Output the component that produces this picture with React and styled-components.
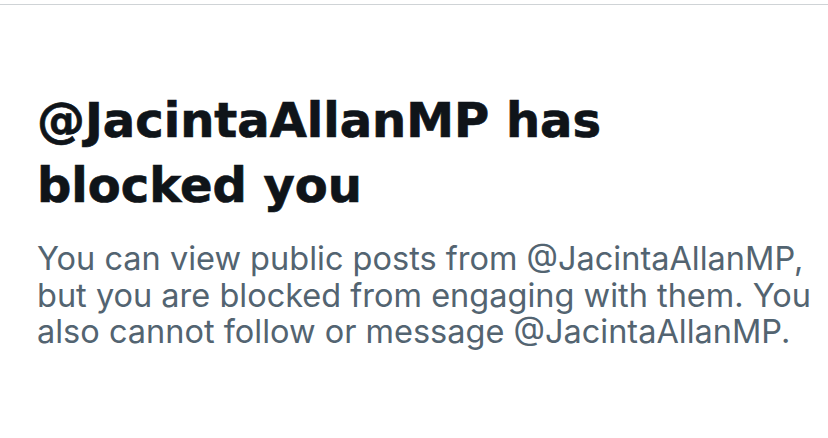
import React from 'react';
import styled, { createGlobalStyle } from 'styled-components';

const GlobalStyle = createGlobalStyle`
    html, body {
        margin: 0;
        padding: 0;
        background: #ffffff;
    }
    body {
        font-family: Inter, "Noto Sans", "Liberation Sans", sans-serif;
    }
`;

const Page = styled.div`
    width: 828px;
    height: 438px;
    background: #ffffff;
    padding-top: 4px;
    box-sizing: border-box;
`;

const Divider = styled.div`
    height: 1px;
    background: #cfd3d6;
`;

const Content = styled.div`
    padding: 83px 10px 0 37px;
`;

const Title = styled.h1`
    margin: 0;
    font-family: "DejaVu Sans", Inter, sans-serif;
    font-size: 48px;
    line-height: 65px;
    font-weight: 700;
    -webkit-text-stroke: 0.7px #0f1419;
    color: #0f1419;
`;

const Message = styled.p`
    margin: 23px 0 0;
    font-size: 32.5px;
    line-height: 36.5px;
    font-weight: 400;
    color: #536471;
`;

const App = () => {
    const handle = '@JacintaAllanMP';
    return (
        <Page>
            <GlobalStyle />
            <Divider />
            <Content>
                <Title>{handle} has blocked you</Title>
                <Message>
                    You can view public posts from {handle}, but you are blocked from engaging with them. You also cannot follow or message {handle}.
                </Message>
            </Content>
        </Page>
    );
};

export default App;
